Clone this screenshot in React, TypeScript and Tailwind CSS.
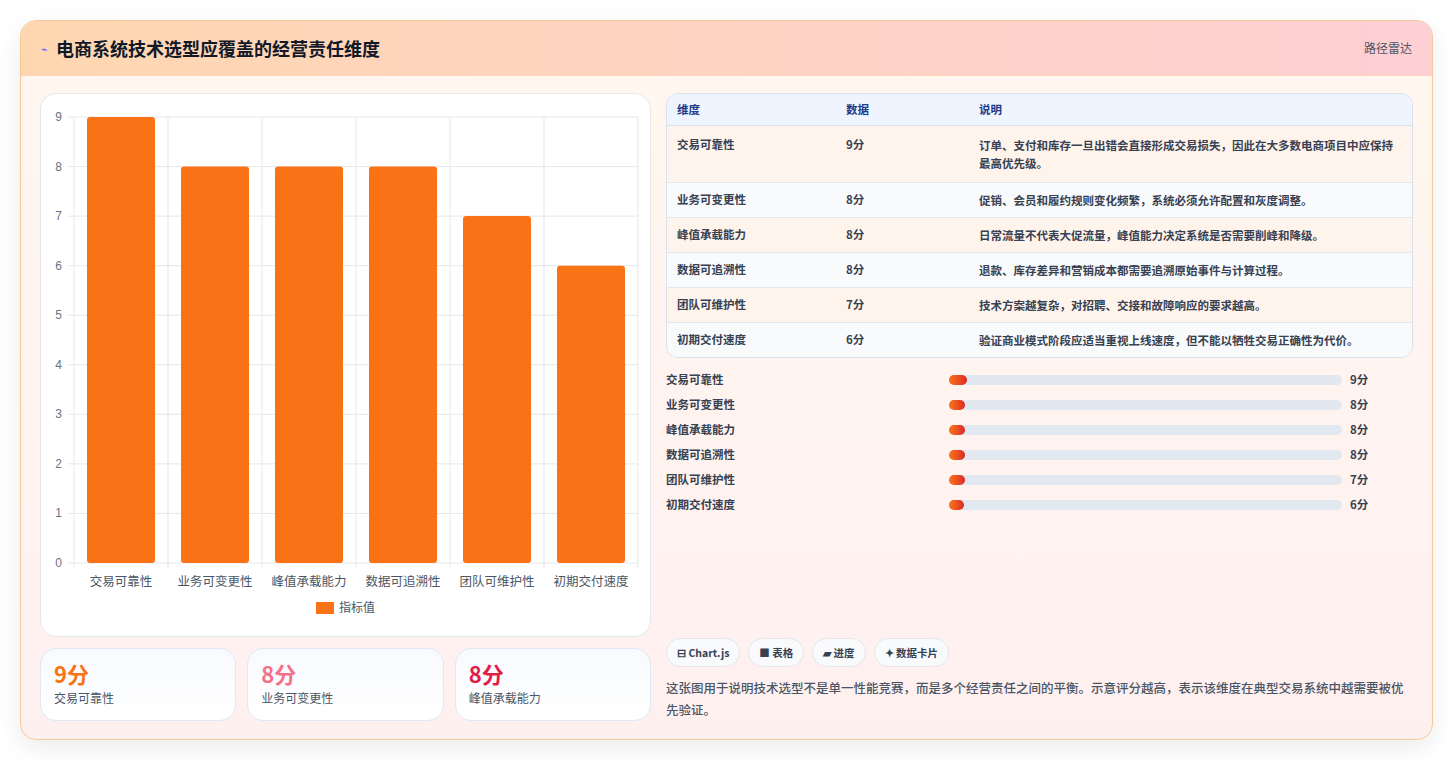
import React from "react";

const data = [
  { n: "交易可靠性", v: 9, d: "订单、支付和库存一旦出错会直接形成交易损失，因此在大多数电商项目中应保持最高优先级。" },
  { n: "业务可变更性", v: 8, d: "促销、会员和履约规则变化频繁，系统必须允许配置和灰度调整。" },
  { n: "峰值承载能力", v: 8, d: "日常流量不代表大促流量，峰值能力决定系统是否需要削峰和降级。" },
  { n: "数据可追溯性", v: 8, d: "退款、库存差异和营销成本都需要追溯原始事件与计算过程。" },
  { n: "团队可维护性", v: 7, d: "技术方案越复杂，对招聘、交接和故障响应的要求越高。" },
  { n: "初期交付速度", v: 6, d: "验证商业模式阶段应适当重视上线速度，但不能以牺牲交易正确性为代价。" },
];

function Chart() {
  const x0 = 33, x1 = 597, y0 = 23, y1 = 469;
  const step = (y1 - y0) / 9;
  const cw = (x1 - x0) / 6;
  return (
    <svg width="610" height="543" className="block">
      {Array.from({ length: 10 }, (_, i) => (
        <g key={i}>
          <line x1={x0 - 6} x2={x1} y1={y1 - i * step} y2={y1 - i * step} stroke="#e5e7eb" />
          <text x={x0 - 12} y={y1 - i * step + 4} fontSize="12" fill="#6b7280" textAnchor="end" fontFamily="Liberation Sans, sans-serif">{i}</text>
        </g>
      ))}
      {Array.from({ length: 7 }, (_, i) => (
        <line key={i} x1={x0 + i * cw} x2={x0 + i * cw} y1={y0} y2={y1 + 6} stroke="#e5e7eb" />
      ))}
      {data.map((d, i) => (
        <g key={d.n}>
          <rect x={x0 + i * cw + 13} y={y1 - d.v * step} width={cw - 26} height={d.v * step} rx="3" fill="#f97316" />
          <text x={x0 + i * cw + cw / 2} y={y1 + 23} fontSize="12.5" fill="#4b5563" textAnchor="middle" fontFamily="Noto Sans CJK SC, sans-serif">{d.n}</text>
        </g>
      ))}
      <rect x="275" y="508" width="18" height="12" fill="#f97316" />
      <text x="298" y="518" fontSize="12" fill="#4b5563" fontFamily="Noto Sans CJK SC, sans-serif">指标值</text>
    </svg>
  );
}

export default function App() {
  const bw: Record<number, number> = { 9: 18, 8: 16, 7: 16, 6: 15 };
  return (
    <div className="w-[1453px] h-[761px] bg-white p-5" style={{ fontFamily: '"Noto Sans CJK SC", "Noto Sans", sans-serif' }}>
      <div className="h-[720px] rounded-2xl border border-[#f5c89a] overflow-hidden shadow-[0_8px_24px_rgba(0,0,0,0.08)] flex flex-col bg-gradient-to-b from-[#fff7ef] to-[#fff0f0]">
        <div className="h-[55px] flex items-center justify-between px-5 bg-gradient-to-r from-[#fed7b0] to-[#fecfd4] border-b border-[#f7d3b8]">
          <div className="flex items-center gap-2">
            <span className="text-[11px] text-indigo-500">⌁</span>
            <span className="text-[18px] font-bold text-[#111827]">电商系统技术选型应覆盖的经营责任维度</span>
          </div>
          <span className="text-[12px] text-[#4b5563]">路径雷达</span>
        </div>
        <div className="flex-1 flex gap-[15px] px-[19px] pt-[17px] pb-[18px]">
          <div className="w-[611px] flex flex-col gap-[11px]">
            <div className="h-[544px] rounded-2xl bg-white border border-[#e5e7eb]"><Chart /></div>
            <div className="flex gap-[11px]">
              {[["9分", "text-[#f97316]", "交易可靠性"], ["8分", "text-[#f47289]", "业务可变更性"], ["8分", "text-[#e11d48]", "峰值承载能力"]].map(([v, c, l]) => (
                <div key={l} className="flex-1 h-[73px] rounded-2xl border border-[#e0e7f5] bg-gradient-to-b from-[#f8fafe] to-white px-[13px] pt-[10px]">
                  <div className={`text-[22px] font-bold leading-[28px] ${c}`}>{v}</div>
                  <div className="text-[12px] text-[#4b5563] mt-[2px]">{l}</div>
                </div>
              ))}
            </div>
          </div>
          <div className="flex-1 flex flex-col">
            <div className="rounded-xl border border-[#d9e1ee] overflow-hidden text-[11.5px] text-[#374151] font-semibold">
              <div className="flex bg-[#eef5fe] h-[32px] items-center text-[#1e3a8a] border-b border-[#d9e1ee]">
                <div className="w-[179px] pl-[10px]">维度</div><div className="w-[133px]">数据</div><div className="flex-1">说明</div>
              </div>
              {data.map((d, i) => (
                <div key={d.n} className={`flex ${i % 2 === 0 ? "bg-[#fff4ec]" : "bg-[#f8fafc]"} ${i ? "border-t border-[#e5e7eb]" : ""} ${i === 0 ? "py-[10px]" : "h-[35px] items-center"}`}>
                  <div className="w-[179px] pl-[10px]">{d.n}</div><div className="w-[133px]">{d.v}分</div><div className="flex-1 pr-3 leading-[18px]">{d.d}</div>
                </div>
              ))}
            </div>
            <div className="mt-[9px] flex flex-col">
              {data.map((d) => (
                <div key={d.n} className="h-[25px] flex items-center text-[11.5px] font-semibold text-[#374151]">
                  <div className="w-[283px]">{d.n}</div>
                  <div className="w-[393px] h-[10px] rounded-full bg-[#e2e8f0]">
                    <div className="h-full rounded-full bg-gradient-to-r from-[#f97316] to-[#dc2626]" style={{ width: bw[d.v] }} />
                  </div>
                  <div className="ml-[8px]">{d.v}分</div>
                </div>
              ))}
            </div>
            <div className="mt-auto">
              <div className="flex gap-[8px]">
                {["⊟ Chart.js", "■ 表格", "▰ 进度", "✦ 数据卡片"].map((t) => (
                  <span key={t} className="h-[29px] px-[10px] flex items-center rounded-full bg-[#f8fafc] border border-[#e5e7eb] text-[10.5px] font-semibold text-[#374151]">{t}</span>
                ))}
              </div>
              <p className="mt-[10px] text-[12.5px] leading-[22px] text-[#4b5563] font-medium">这张图用于说明技术选型不是单一性能竞赛，而是多个经营责任之间的平衡。示意评分越高，表示该维度在典型交易系统中越需要被优先验证。</p>
            </div>
          </div>
        </div>
      </div>
    </div>
  );
}
